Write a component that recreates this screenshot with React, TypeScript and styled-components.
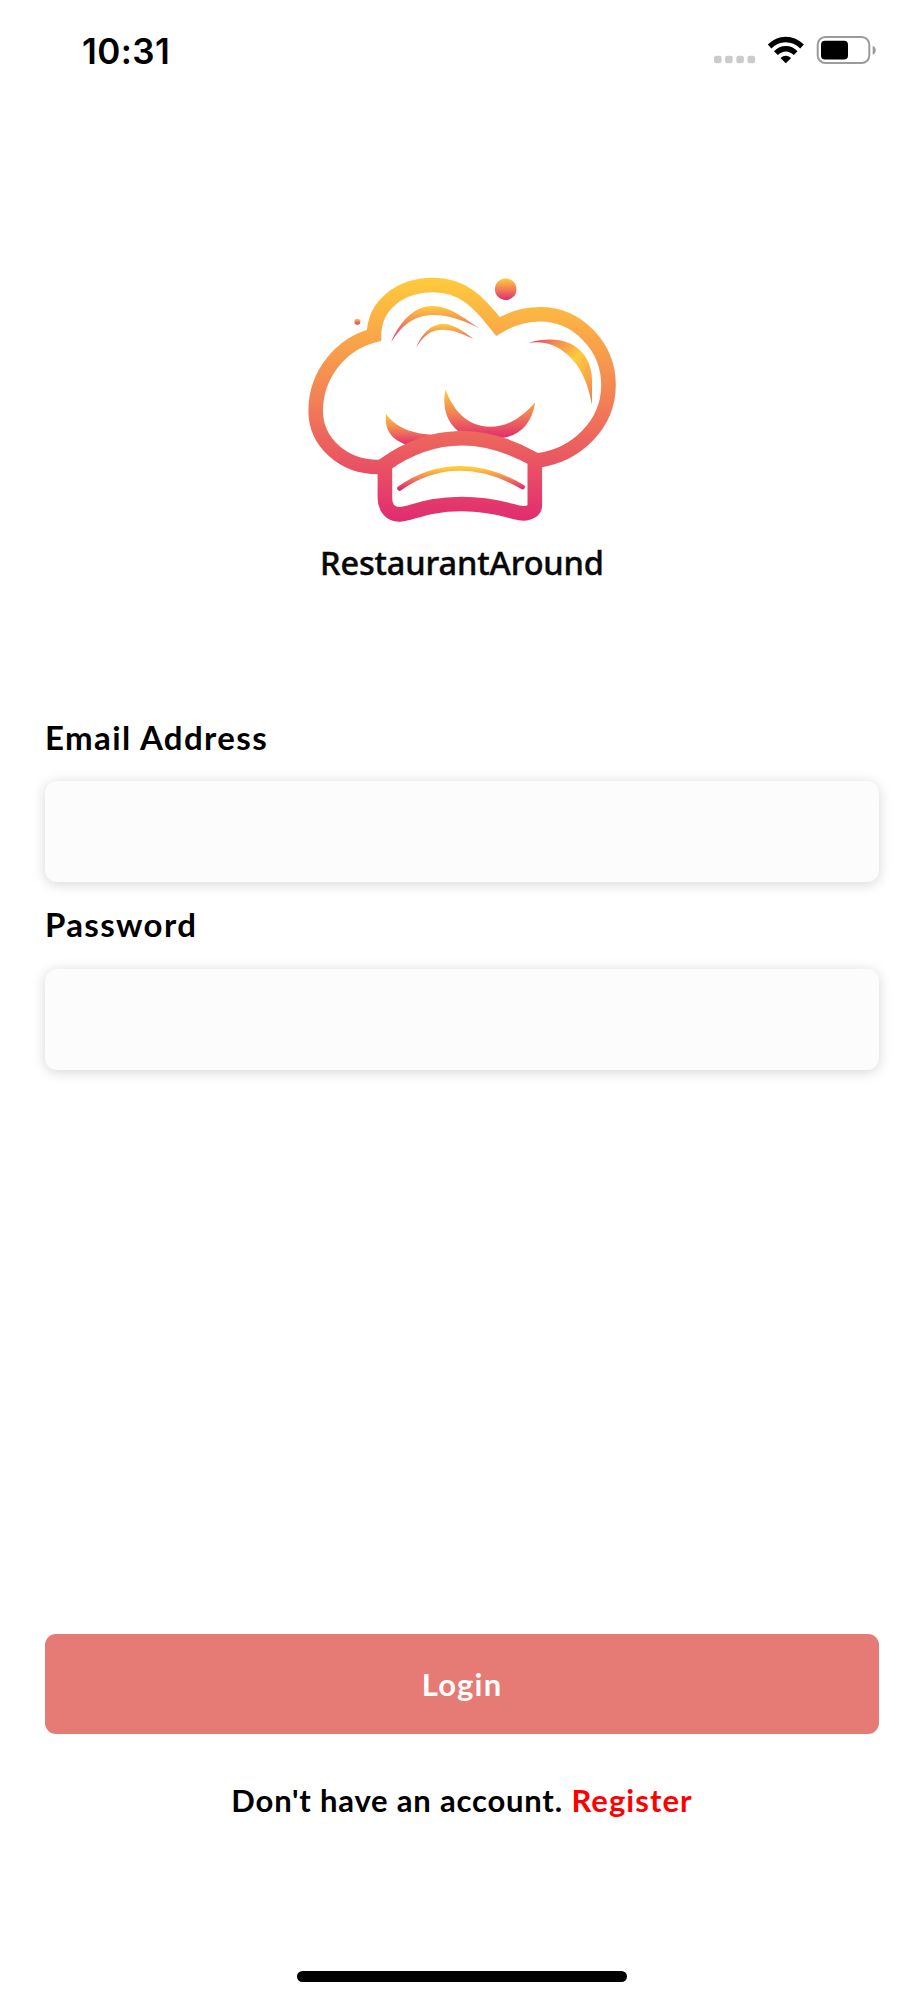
import React from "react";
import styled, { createGlobalStyle } from "styled-components";

const GlobalStyle = createGlobalStyle`
  *, *::before, *::after { box-sizing: border-box; }
  body { margin: 0; background: #fff; }
`;

const Screen = styled.div`
  display: flex;
  flex-direction: column;
  width: 924px;
  height: 2000px;
  overflow: hidden;
  background: #fff;
  color: #000;
  font-family: Lato, "Open Sans", sans-serif;
`;

const StatusBar = styled.header`
  display: flex;
  justify-content: space-between;
  height: 100px;
  padding: 30px 48px 0 82px;
`;

const Clock = styled.time`
  font: 600 35px/42px Inter, sans-serif;
  letter-spacing: 0.4px;
`;

const StatusIcons = styled.svg`
  display: block;
  margin-top: 4px;
`;

const LogoArea = styled.div`
  display: flex;
  justify-content: center;
  height: 600px;
  padding-top: 165px;
`;

const Form = styled.form`
  display: flex;
  flex: 1;
  flex-direction: column;
  padding: 0 45px;
`;

const Field = styled.div`
  display: flex;
  flex-direction: column;
  height: 187.5px;
`;

const Label = styled.label<{ $spacing: number }>`
  height: 81px;
  padding: 15.5px 0 0 0;
  font-size: 33px;
  font-weight: 700;
  line-height: 42px;
  letter-spacing: ${(p) => p.$spacing}px;
`;

const Input = styled.input`
  width: 100%;
  height: 101px;
  padding: 0 24px;
  border: 0;
  border-radius: 12px;
  outline: 0;
  background: #fcfcfc;
  box-shadow: 0 2px 13px rgba(0, 0, 0, 0.17);
  font: 400 32px Lato, sans-serif;
`;

const Actions = styled.div`
  display: flex;
  flex-direction: column;
  height: 337px;
  margin-top: auto;
`;

const LoginButton = styled.button`
  height: 100px;
  padding: 0 0 1px;
  border: 0;
  border-radius: 11px;
  background: #e67a74;
  color: #fff;
  font: 700 31px/40px Lato, sans-serif;
  letter-spacing: 1.2px;
`;

const Prompt = styled.p`
  display: flex;
  justify-content: center;
  gap: 8.5px;
  margin: 46px 0 0;
  font-size: 31px;
  font-weight: 700;
  line-height: 40px;
`;

const PromptText = styled.span`
  letter-spacing: 0.8px;
`;

const RegisterLink = styled.a`
  color: #f00;
  letter-spacing: 1.05px;
`;

const HomeArea = styled.footer`
  display: flex;
  justify-content: center;
  height: 29px;
`;

const HomeIndicator = styled.div`
  width: 330px;
  height: 11px;
  border-radius: 6px;
  background: #000;
`;

function DeviceStatus() {
  return (
    <StatusIcons width="162" height="32" viewBox="714 34 162 32" aria-label="Wi-Fi and battery">
      <g fill="#cbcbcb">
        {[714, 725.1, 736.3, 747.5].map((x) => (
          <rect key={x} x={x} y="55.7" width="7.6" height="7.6" rx="2.2" />
        ))}
      </g>
      <path d="M767.8 44.6Q775.5 36.7 785.8 36.7T803.9 44.6L800.2 48.4Q794 42.2 785.8 42.2T771.4 48.4Z" />
      <path d="M774 51.3Q779 46.1 785.8 46.1T797.5 51.3L793.8 55.1Q790 51.4 785.8 51.4T777.8 55.1Z" />
      <path d="M780.5 58Q785.8 53.4 791.1 58L786.4 62.8Q785.8 63.4 785.2 62.8Z" />
      <rect x="817.7" y="37.1" width="51.6" height="25.8" rx="7.6" fill="none" stroke="#9b9b9b" strokeWidth="2" />
      <rect x="821" y="40.8" width="27" height="18.8" rx="4" />
      <path d="M872.7 45.7Q875.7 47 875.7 50.2T872.7 54.8Z" fill="#9b9b9b" />
    </StatusIcons>
  );
}

function Logo() {
  return (
    <svg width="324" height="330" viewBox="300 265 324 330" role="img" aria-label="RestaurantAround">
      <defs>
        <linearGradient id="hat" gradientUnits="userSpaceOnUse" x1="0" y1="278" x2="0" y2="522">
          <stop offset="0" stopColor="#ffcb3b" />
          <stop offset="0.5" stopColor="#f28055" />
          <stop offset="1" stopColor="#e12b70" />
        </linearGradient>
        <linearGradient id="accent" x1="0" y1="0" x2="0" y2="1">
          <stop offset="0" stopColor="#ffcb3b" />
          <stop offset="0.5" stopColor="#f28055" />
          <stop offset="1" stopColor="#e12b70" />
        </linearGradient>
        <linearGradient id="side" gradientUnits="userSpaceOnUse" x1="528" y1="343" x2="592" y2="405">
          <stop offset="0" stopColor="#e83b6c" />
          <stop offset="0.22" stopColor="#f48a51" />
          <stop offset="0.5" stopColor="#ffcb3b" />
          <stop offset="0.75" stopColor="#fba746" />
          <stop offset="1" stopColor="#f0744f" />
        </linearGradient>
      </defs>
      <circle cx="505.7" cy="289.2" r="10.8" fill="url(#accent)" />
      <circle cx="357.4" cy="321.7" r="3" fill="url(#accent)" />
      <g fill="url(#accent)">
        <path d="M391 342.5C401 318 417 306 432 306C450 306 465 319 480 328.5C465 321 449 315 434 315C416 315 403 323 391 342.5Z" />
        <path d="M416 347.5C423 332 432 324 443 324C454 324 463 331 473.5 339C463 334 453 329.7 443 329.7C431 329.7 424 335 416 347.5Z" />
        <path d="M386 413.8C393 424 407 434 434 434.8L407 445C392 440 384 430 386 413.8Z" />
        <path d="M445.6 389.5C452 408 466 426.7 490 426.7C511 426.7 523 415 535.2 402.5C532 423 520 436 502 438L461 433C449 425 441 410 445.6 389.5Z" />
      </g>
      <path fill="url(#side)" d="M528.3 342.7C569 331 592 352 592 380V405C588 383 581 367 568 355C557 345 544 340.5 528.3 342.7Z" />
      <g fill="none" stroke="url(#hat)" strokeWidth="14.6">
        <path d="M385 467H378C343 467 315.7 442 315.7 411C315.7 374 341 344 374 335.3C374 305 400 285 433.3 285C463 285 479 302 498 326.5C512 318 524 314.3 540 314.3C578 314.3 608.5 347 608.5 385C608.5 424 577 455 538 460.5" />
        <path d="M384.9 464.5C433 430.5 484 430.5 534.8 459.5V505C534.8 511 529 513.4 523.5 513.4C514 513.4 498 504 462 504C425 504 411 514.4 399.5 514.4C390 514.4 384.9 507 384.9 498Z" />
      </g>
      <path d="M399.5 488.5C437 462 480 462 522.5 487" fill="none" stroke="url(#accent)" strokeWidth="4.7" strokeLinecap="round" />
      <text x="320" y="575" fill="#080808" stroke="#080808" strokeWidth="0.4" fontFamily="'Noto Sans', 'Open Sans', sans-serif" fontWeight="500" fontSize="32.5" textLength="284">
        RestaurantAround
      </text>
    </svg>
  );
}

export default function App() {
  return (
    <Screen>
      <GlobalStyle />
      <StatusBar>
        <Clock>10:31</Clock>
        <DeviceStatus />
      </StatusBar>
      <LogoArea>
        <Logo />
      </LogoArea>
      <Form onSubmit={(event) => event.preventDefault()}>
        <Field>
          <Label htmlFor="email" $spacing={1.4}>Email Address</Label>
          <Input id="email" type="email" />
        </Field>
        <Field>
          <Label htmlFor="password" $spacing={1.35}>Password</Label>
          <Input id="password" type="password" />
        </Field>
        <Actions>
          <LoginButton type="submit">Login</LoginButton>
          <Prompt>
            <PromptText>Don't have an account.</PromptText>
            <RegisterLink>Register</RegisterLink>
          </Prompt>
        </Actions>
      </Form>
      <HomeArea>
        <HomeIndicator />
      </HomeArea>
    </Screen>
  );
}
